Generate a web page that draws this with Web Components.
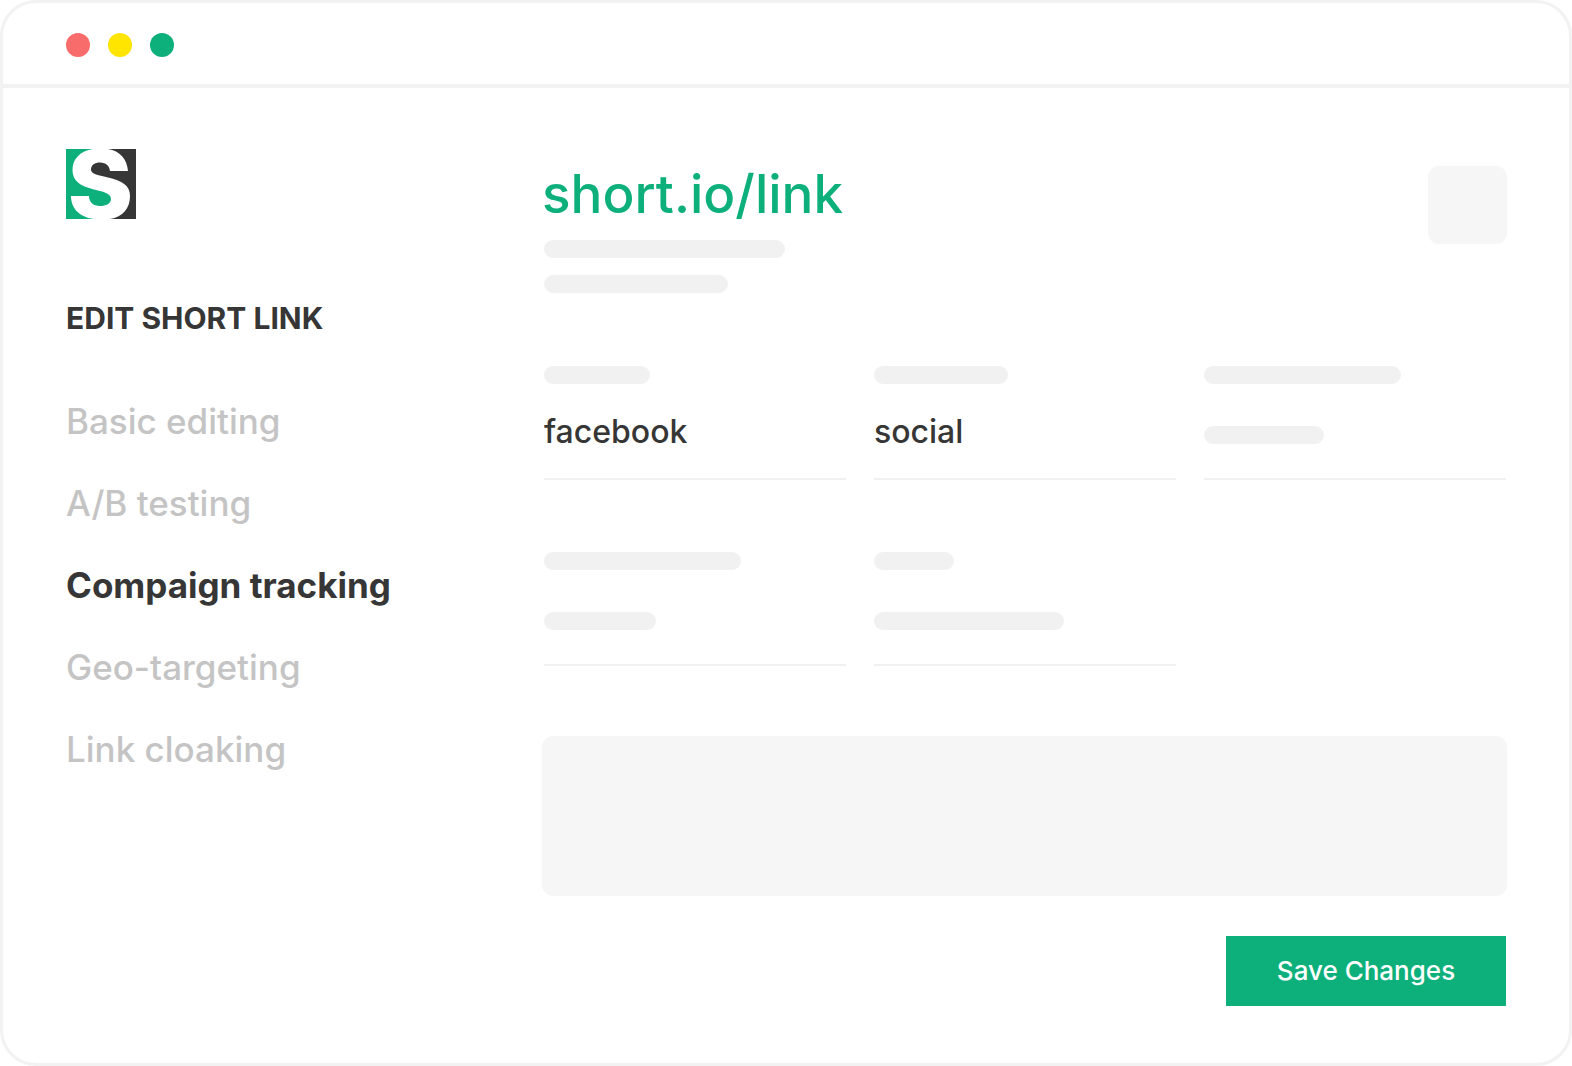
<!DOCTYPE html>
<html lang="en">
<head>
<meta charset="utf-8">
<title>Edit short link</title>
<style>
  body { margin: 0; background: #fff; font-family: Inter, "Open Sans", sans-serif; color: #363636; }
</style>
</head>
<body>
<app-window>
  <side-nav slot="side" heading="EDIT SHORT LINK">
    <nav-item>Basic editing</nav-item>
    <nav-item>A/B testing</nav-item>
    <nav-item current>Compaign tracking</nav-item>
    <nav-item>Geo-targeting</nav-item>
    <nav-item>Link cloaking</nav-item>
  </side-nav>
  <link-editor>
    <link-header slot="header">short.io/link</link-header>
    <link-field label-width="106" name="Source" value="facebook"></link-field>
    <link-field label-width="134" name="Medium" value="social"></link-field>
    <link-field label-width="197" value-width="120"></link-field>
    <link-field label-width="197" value-width="112"></link-field>
    <link-field label-width="80" value-width="190"></link-field>
    <save-button slot="actions">Save Changes</save-button>
  </link-editor>
</app-window>

<script>
class Base extends HTMLElement {
  constructor() {
    super();
    this.attachShadow({ mode: 'open' });
  }
  connectedCallback() {
    this.shadowRoot.innerHTML = '<style>*{box-sizing:border-box}</style>' + this.view();
  }
}

customElements.define('app-window', class extends Base {
  view() {
    return `<style>
      :host { display: flex; flex-direction: column; box-sizing: border-box; min-height: 100vh; border: 3px solid #f2f2f2; border-radius: 36px; background: #fff; overflow: hidden; }
      header { display: flex; align-items: center; gap: 18px; height: 85px; padding: 2px 63px 0; border-bottom: 4px solid #f2f2f2; }
      i { width: 24px; height: 24px; border-radius: 50%; }
      .body { flex: 1; display: grid; grid-template-columns: 476px minmax(0, 1fr); padding: 61px 62px 57px 63px; }
    </style>
    <header><i style="background:#f86c6b"></i><i style="background:#ffe500"></i><i style="background:#0db07b"></i></header>
    <div class="body"><slot name="side"></slot><slot></slot></div>`;
  }
});

customElements.define('short-logo', class extends Base {
  view() {
    return `<style>:host { display: block; } svg { display: block; }</style>
    <svg width="70" height="70" viewBox="0 0 70 70" role="img" aria-label="Short.io">
      <path fill="#0db07b" d="M0 0H27C14 2 6.500 10 6.500 21C6.500 32 14 37 28 40.500C39 43 45 45 45 50C45 54.500 40 57 34 57C27 57 23 53 23 47H5C5 58 12 68 28 70H0Z"/>
      <path fill="#363636" d="M70 0V70H44C57 68 64 59 64 47C64 36 56 32 42 28.500C31 26 25 25 25 20.500C25 16 29 13.500 34 13.500C40 13.500 43.500 17 44 22H62C61 10 54 2 42 0Z"/>
    </svg>`;
  }
});

customElements.define('side-nav', class extends Base {
  view() {
    return `<style>
      :host { display: block; }
      h2 { margin: 79px 0 62px; font-size: 30px; line-height: 40px; font-weight: 700; }
      nav { display: flex; flex-direction: column; gap: 40px; }
    </style>
    <short-logo></short-logo>
    <h2>${this.getAttribute('heading')}</h2>
    <nav><slot></slot></nav>`;
  }
});

customElements.define('nav-item', class extends Base {
  view() {
    const current = this.hasAttribute('current');
    return `<style>
      :host { display: block; font-size: 35px; line-height: 42px; font-weight: 500; color: #c4c4c4; }
      :host([current]) { font-weight: 700; color: #363636; }
      a { color: inherit; text-decoration: none; }
    </style>
    <a href="#"${current ? ' aria-current="page"' : ''}><slot></slot></a>`;
  }
});

customElements.define('skeleton-bar', class extends Base {
  view() {
    return `<style>
      :host { display: block; width: ${this.getAttribute('width')}px; max-width: 100%; height: 18px; border-radius: 9px; background: #f1f1f1; }
    </style>`;
  }
});

customElements.define('link-header', class extends Base {
  view() {
    return `<style>
      :host { display: flex; justify-content: space-between; align-items: flex-start; padding-top: 17px; }
      h1 { margin: 0 0 18px; font-size: 53px; line-height: 56px; font-weight: 500; color: #0db07b; }
      .bars { display: grid; gap: 17px; padding-left: 2px; }
      .tile { width: 79px; height: 78px; border-radius: 11px; background: #f6f6f6; }
    </style>
    <div><h1><slot></slot></h1>
      <div class="bars"><skeleton-bar width="241"></skeleton-bar><skeleton-bar width="184"></skeleton-bar></div>
    </div>
    <div class="tile"></div>`;
  }
});

customElements.define('link-field', class extends Base {
  view() {
    const value = this.getAttribute('value');
    const name = this.getAttribute('name');
    return `<style>
      :host { display: block; border-bottom: 2px solid #f1f1f1; }
      .value { display: flex; align-items: center; height: 94px; padding-top: 8px; }
      input { width: 100%; height: 48px; padding: 0 0 8px; border: 0; outline: 0; background: none; font: 500 32px/40px Inter, "Open Sans", sans-serif; color: #363636; }
    </style>
    <skeleton-bar width="${this.getAttribute('label-width')}"></skeleton-bar>
    <div class="value">${value
      ? `<input type="text" aria-label="${name}" value="${value}" spellcheck="false">`
      : `<skeleton-bar width="${this.getAttribute('value-width')}"></skeleton-bar>`}</div>`;
  }
});

customElements.define('save-button', class extends Base {
  view() {
    return `<style>
      :host { display: block; }
      button { display: block; width: 280px; height: 70px; padding: 0; border: 0; background: #0db07b; color: #fff; font: 500 26px/32px Inter, "Open Sans", sans-serif; cursor: pointer; }
    </style>
    <button type="button"><slot></slot></button>`;
  }
});

customElements.define('link-editor', class extends Base {
  view() {
    return `<style>
      :host { display: block; }
      .fields { display: grid; grid-template-columns: repeat(3, minmax(0, 1fr)); gap: 72px 28px; margin: 73px 0 70px; padding: 0 1px 0 2px; }
      .panel { height: 160px; border-radius: 11px; background: #f6f6f6; }
      .actions { display: flex; justify-content: flex-end; margin-top: 40px; padding-right: 1px; }
    </style>
    <slot name="header"></slot>
    <div class="fields"><slot></slot></div>
    <div class="panel"></div>
    <div class="actions"><slot name="actions"></slot></div>`;
  }
});
</script>
</body>
</html>
